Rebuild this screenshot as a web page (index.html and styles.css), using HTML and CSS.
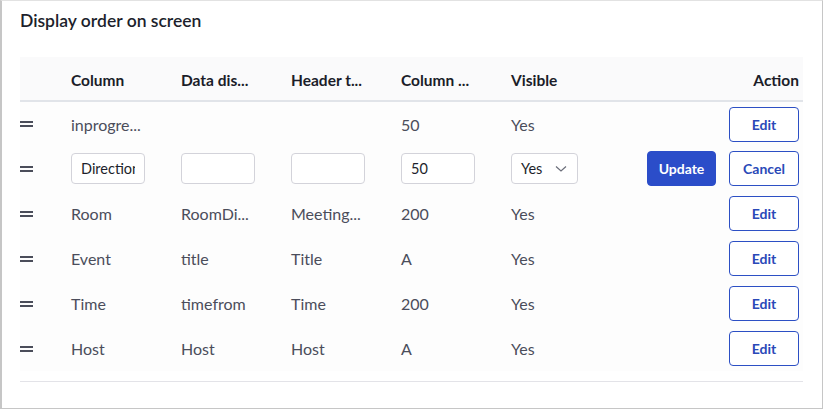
FILE: index.html
```html
<!DOCTYPE html>
<html lang="en">
<head>
    <meta charset="UTF-8">
    <meta name="viewport" content="width=device-width, initial-scale=1.0">
    <title>Display order</title>
    <link rel="stylesheet" href="styles.css">
</head>
<body>
    <div class="panel">
        <h2 class="title">Display order on screen</h2>
        <table class="order">
            <thead>
                <tr>
                    <th class="drag"></th>
                    <th>Column</th>
                    <th>Data dis...</th>
                    <th>Header t...</th>
                    <th>Column ...</th>
                    <th>Visible</th>
                    <th class="spare"></th>
                    <th class="action">Action</th>
                </tr>
            </thead>
            <tbody>
                <tr>
                    <td class="drag"><span class="handle"></span></td>
                    <td>inprogre...</td>
                    <td></td>
                    <td></td>
                    <td>50</td>
                    <td>Yes</td>
                    <td class="spare"></td>
                    <td class="action"><button class="btn">Edit</button></td>
                </tr>
                <tr class="editing">
                    <td class="drag"><span class="handle"></span></td>
                    <td><input class="field" type="text" value="Direction"></td>
                    <td><input class="field" type="text" value=""></td>
                    <td><input class="field" type="text" value=""></td>
                    <td><input class="field" type="text" value="50"></td>
                    <td>
                        <div class="select">
                            <span>Yes</span>
                            <svg width="12" height="8" viewBox="0 0 12 8"><path d="M1 1.5 L6 6 L11 1.5" fill="none" stroke="#6b6e7a" stroke-width="1.2"/></svg>
                        </div>
                    </td>
                    <td class="spare"><button class="btn primary">Update</button></td>
                    <td class="action"><button class="btn">Cancel</button></td>
                </tr>
                <tr>
                    <td class="drag"><span class="handle"></span></td>
                    <td>Room</td>
                    <td>RoomDi...</td>
                    <td>Meeting...</td>
                    <td>200</td>
                    <td>Yes</td>
                    <td class="spare"></td>
                    <td class="action"><button class="btn">Edit</button></td>
                </tr>
                <tr>
                    <td class="drag"><span class="handle"></span></td>
                    <td>Event</td>
                    <td>title</td>
                    <td>Title</td>
                    <td>A</td>
                    <td>Yes</td>
                    <td class="spare"></td>
                    <td class="action"><button class="btn">Edit</button></td>
                </tr>
                <tr>
                    <td class="drag"><span class="handle"></span></td>
                    <td>Time</td>
                    <td>timefrom</td>
                    <td>Time</td>
                    <td>200</td>
                    <td>Yes</td>
                    <td class="spare"></td>
                    <td class="action"><button class="btn">Edit</button></td>
                </tr>
                <tr>
                    <td class="drag"><span class="handle"></span></td>
                    <td>Host</td>
                    <td>Host</td>
                    <td>Host</td>
                    <td>A</td>
                    <td>Yes</td>
                    <td class="spare"></td>
                    <td class="action"><button class="btn">Edit</button></td>
                </tr>
            </tbody>
        </table>
        <div class="rule"></div>
    </div>
</body>
</html>
```

FILE: styles.css
```css
*{
    box-sizing: border-box;
}

body{
    margin: 0;
    background: #ffffff;
    font-family: 'Lato', 'Noto Sans', sans-serif;
    color: #1f2130;
}

.panel{
    width: 823px;
    height: 409px;
    border: 1px solid #c6c6c6;
    border-left-width: 2px;
    border-top-color: #e2e2e2;
    padding: 0 18px 0 18px;
}

.title{
    margin: 0;
    padding-top: 9px;
    height: 56px;
    font-size: 17.5px;
    font-weight: 600;
    color: #1d1f2c;
}

.order{
    width: 783px;
    border-collapse: collapse;
    table-layout: fixed;
}

.order th{
    height: 44px;
    text-align: left;
    font-size: 15.5px;
    font-weight: 700;
    color: #1b1d29;
    background: #fafafb;
    border-bottom: 2px solid #e1e4e9;
    padding: 3px 0 0 0;
    width: 110px;
}

.order td{
    height: 45px;
    font-size: 16px;
    color: #4b4d5b;
    background: #fdfdfd;
    padding: 0;
    white-space: nowrap;
}

.order .drag{
    width: 51px;
}

.order .spare{
    width: 104px;
    text-align: right;
    padding-right: 9px;
}

.order .action{
    width: 78px;
    text-align: right;
    padding-right: 4px;
}

.handle{
    display: block;
    width: 13px;
    height: 6px;
    border-top: 2px solid #4a4d5a;
    border-bottom: 2px solid #4a4d5a;
}

.btn{
    width: 70px;
    height: 35px;
    border: 1px solid #2c4fc4;
    border-radius: 4px;
    background: #ffffff;
    color: #2a49b8;
    font-family: inherit;
    font-size: 14px;
    font-weight: 700;
    cursor: pointer;
    vertical-align: middle;
    padding: 0;
}

.primary{
    width: 69px;
    background: #2b4dc9;
    border-color: #2b4dc9;
    color: #ffffff;
}

.field{
    width: 74px;
    height: 31px;
    border: 1px solid #d3d3da;
    border-radius: 4px;
    padding: 0 9px;
    font-family: inherit;
    font-size: 14.5px;
    color: #1d1f2c;
    background: #ffffff;
    vertical-align: middle;
}

.select{
    display: flex;
    align-items: center;
    justify-content: space-between;
    width: 67px;
    height: 31px;
    border: 1px solid #d3d3da;
    border-radius: 4px;
    padding: 0 10px 0 9px;
    font-size: 14.5px;
    color: #1d1f2c;
    background: #ffffff;
}

.rule{
    margin-top: 10px;
    width: 783px;
    height: 1px;
    background: #e3e3e8;
}
```
